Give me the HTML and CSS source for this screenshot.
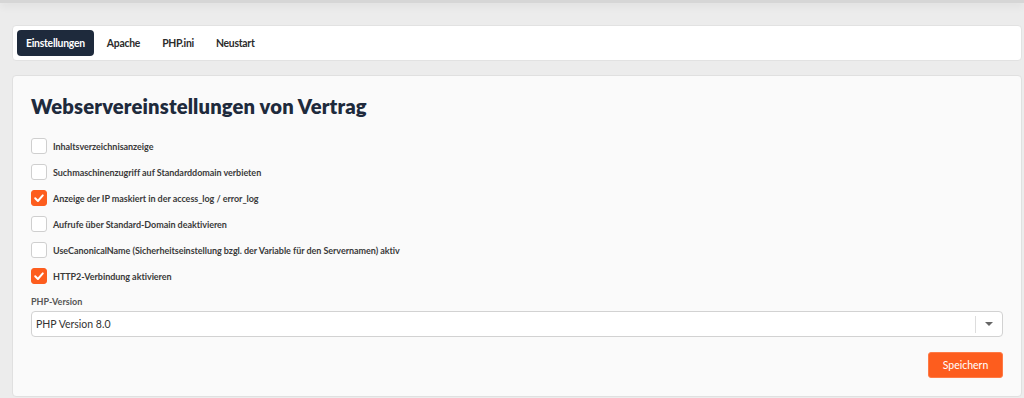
FILE: index.html
```html
<!DOCTYPE html>
<html lang="de">
<head>
<meta charset="utf-8">
<title>Webservereinstellungen</title>
<link rel="stylesheet" href="styles.css">
</head>
<body>
<div class="topbar"></div>
<div class="page">
  <nav class="tabs">
    <a class="tab active">Einstellungen</a>
    <a class="tab">Apache</a>
    <a class="tab">PHP.ini</a>
    <a class="tab">Neustart</a>
  </nav>
  <section class="card">
    <h1 class="title">Webservereinstellungen von Vertrag</h1>
    <div class="checks">
      <label class="check"><span class="box"></span><span class="text">Inhaltsverzeichnisanzeige</span></label>
      <label class="check"><span class="box"></span><span class="text">Suchmaschinenzugriff auf Standarddomain verbieten</span></label>
      <label class="check"><span class="box on"><svg viewBox="0 0 16 16" width="16" height="16"><path d="M4.2 8.3 L6.9 11 L11.8 5.4" fill="none" stroke="#fff" stroke-width="2" stroke-linecap="round" stroke-linejoin="round"/></svg></span><span class="text">Anzeige der IP maskiert in der access_log / error_log</span></label>
      <label class="check"><span class="box"></span><span class="text">Aufrufe über Standard-Domain deaktivieren</span></label>
      <label class="check"><span class="box"></span><span class="text">UseCanonicalName (Sicherheitseinstellung bzgl. der Variable für den Servernamen) aktiv</span></label>
      <label class="check"><span class="box on"><svg viewBox="0 0 16 16" width="16" height="16"><path d="M4.2 8.3 L6.9 11 L11.8 5.4" fill="none" stroke="#fff" stroke-width="2" stroke-linecap="round" stroke-linejoin="round"/></svg></span><span class="text">HTTP2-Verbindung aktivieren</span></label>
    </div>
    <div class="field">
      <div class="field-label">PHP-Version</div>
      <div class="select">
        <span class="select-value">PHP Version 8.0</span>
        <span class="select-sep"></span>
        <span class="select-arrow"></span>
      </div>
    </div>
    <div class="actions">
      <button class="btn">Speichern</button>
    </div>
  </section>
</div>
</body>
</html>
```

FILE: styles.css
```css
* { box-sizing: border-box; }
html, body { margin: 0; padding: 0; }
body {
  background: #ececec;
  font-family: Lato, "Noto Sans", sans-serif;
  color: #333;
  height: 398px;
  overflow: hidden;
}
.topbar {
  height: 3px;
  background: #d6d6d6;
  box-shadow: 0 2px 8px rgba(0,0,0,0.12);
}
.page {
  padding: 22px 2px 0 12px;
  display: flex;
  flex-direction: column;
  gap: 14px;
}
.tabs {
  background: #fff;
  border: 1px solid #e2e2e2;
  border-radius: 4px;
  height: 36px;
  padding: 4px;
  display: flex;
  gap: 4px;
}
.tab {
  display: flex;
  align-items: center;
  height: 26px;
  padding: 0 9px;
  font-size: 10.4px;
  font-weight: 700;
  letter-spacing: -0.25px;
  color: #2b2b2b;
  border-radius: 4px;
}
.tab.active {
  background: #1e2a3c;
  color: #fff;
}
.card {
  background: #fafafa;
  border: 1px solid #e0e0e0;
  border-radius: 4px;
  padding: 18px 18px 17px 18px;
  height: 322px;
}
.title {
  margin: 0;
  font-size: 20.2px;
  line-height: 24px;
  font-weight: 800;
  color: #1e2a3c;
  letter-spacing: 0.15px;
}
.checks {
  margin-top: 20px;
  display: flex;
  flex-direction: column;
  gap: 10px;
}
.check {
  display: flex;
  align-items: center;
  gap: 6px;
  height: 16px;
}
.box {
  width: 16px;
  height: 16px;
  border: 1px solid #cfcfcf;
  border-radius: 3px;
  background: #fff;
  flex: none;
  display: flex;
}
.box.on {
  background: #fd5d1e;
  border-color: #fd5d1e;
}
.box.on svg { margin: -1px; }
.text {
  font-size: 9px;
  font-weight: 700;
  color: #3a3a3a;
  letter-spacing: -0.05px;
}
.field { margin-top: 12px; }
.field-label {
  font-size: 9px;
  font-weight: 700;
  color: #555;
  line-height: 12px;
  margin-bottom: 3px;
}
.select {
  height: 26px;
  background: #fff;
  border: 1px solid #d2d2d2;
  border-radius: 4px;
  display: flex;
  align-items: center;
  padding-left: 4px;
}
.select-value {
  flex: 1;
  font-size: 10.5px;
  color: #333;
}
.select-sep {
  width: 1px;
  height: 17px;
  background: #ddd;
}
.select-arrow {
  width: 26px;
  display: flex;
  justify-content: center;
}
.select-arrow::before {
  content: "";
  border-left: 4px solid transparent;
  border-right: 4px solid transparent;
  border-top: 4px solid #666;
}
.actions {
  margin-top: 15px;
  display: flex;
  justify-content: flex-end;
}
.btn {
  width: 75px;
  height: 26px;
  background: #fd5d1e;
  color: #fff;
  border: 1px solid #ff7a45;
  border-radius: 3px;
  font-family: inherit;
  font-size: 10.5px;
  font-weight: 400;
}
```
